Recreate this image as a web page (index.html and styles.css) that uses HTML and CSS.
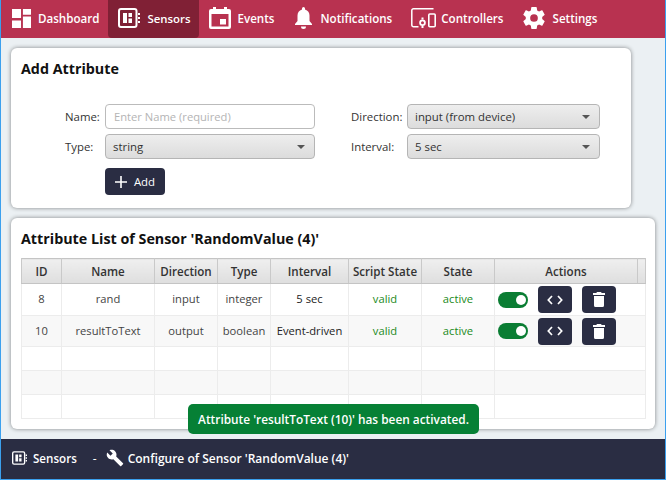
FILE: index.html
```html
<!DOCTYPE html>
<html lang="en">
<head>
<meta charset="utf-8">
<title>Sensors</title>
<link rel="stylesheet" href="styles.css">
</head>
<body>
<div class="app">
  <nav class="nav">
    <a class="nav-item first"><svg class="ic" width="19" height="19" viewBox="0 0 20 20"><path fill="#fff" d="M0 0h9.500v9.500H0zM11.500 0H20v6h-8.500zM0 12h9.500v8H0zM11.500 8H20v12h-8.500z"/></svg><span>Dashboard</span></a>
    <a class="nav-item active"><svg class="ic" width="22" height="20" viewBox="0 0 22 20"><rect x="1" y="1" width="17.500" height="18" rx="2" fill="none" stroke="#fff" stroke-width="2"/><path fill="#fff" d="M5 5h4v10H5zM10.500 5H14v4h-3.500zM10.500 10.500H14V15h-3.500zM20 5h2v2h-2zM20 9h2v2h-2zM20 13h2v2h-2z"/></svg><span>Sensors</span></a>
    <a class="nav-item"><svg class="ic" width="22" height="22" viewBox="0 0 22 22"><path fill="#fff" d="M4 0h3v2h8V0h3v2h2a2 2 0 0 1 2 2v16a2 2 0 0 1-2 2H2a2 2 0 0 1-2-2V4a2 2 0 0 1 2-2h2zM2.500 7v12.500h17V7zM11 12h6v5.500h-6z" fill-rule="evenodd"/></svg><span>Events</span></a>
    <a class="nav-item bell"><svg class="ic" width="17" height="22" viewBox="0 0 17 22"><path fill="#fff" d="M8.500 0a1.500 1.500 0 0 1 1.500 1.500v.9c3 .8 4.500 3.400 4.500 6.100v5.500L17 17v1H0v-1l2.500-3V8.500c0-2.700 1.500-5.300 4.500-6.100v-.9A1.500 1.500 0 0 1 8.500 0zM6 19.500h5A2.500 2.500 0 0 1 6 19.500z"/></svg><span>Notifications</span></a>
    <a class="nav-item ctrl"><svg class="ic" width="25" height="20" viewBox="0 0 25 20"><path fill="none" stroke="#fff" stroke-width="1.500" d="M7.500 18.700H2.500a1.700 1.700 0 0 1-1.700-1.700V2.500A1.700 1.700 0 0 1 2.500.8H22.500"/><rect x="17.800" y="6" width="6.400" height="12.800" rx="1" fill="none" stroke="#fff" stroke-width="1.600"/><circle cx="11.500" cy="14.800" r="2.400" fill="none" stroke="#fff" stroke-width="1.800"/><path fill="#fff" d="M10.500 9.500h2v2h-2zM10.500 18h2v2h-2z"/></svg><span>Controllers</span></a>
    <a class="nav-item gear"><svg class="ic" width="22" height="22" viewBox="2 2 20 20"><path fill="#fff" d="M12 15.500A3.500 3.500 0 1 1 12 8.500a3.500 3.500 0 0 1 0 7zm7.430-2.530c.04-.32.07-.64.07-.97s-.03-.66-.07-1l2.110-1.630c.19-.15.240-.42.120-.64l-2-3.460c-.12-.22-.39-.31-.61-.22l-2.490 1c-.52-.39-1.060-.73-1.690-.98l-.37-2.650A.506.506 0 0 0 14 2h-4c-.25 0-.46.180-.5.420l-.37 2.650c-.63.250-1.170.590-1.690.98l-2.490-1c-.22-.090-.49 0-.61.220l-2 3.460c-.13.220-.07.490.120.640L4.570 11c-.04.340-.07.670-.07 1s.03.650.07.970l-2.110 1.660c-.19.150-.25.420-.12.640l2 3.460c.12.220.39.300.61.220l2.490-1.010c.52.400 1.060.74 1.690.990l.37 2.650c.04.240.25.420.5.420h4c.25 0 .46-.18.5-.42l.37-2.650c.63-.26 1.170-.59 1.690-.99l2.490 1.010c.22.080.49 0 .61-.22l2-3.460c.12-.22.070-.49-.12-.64l-2.110-1.660z"/></svg><span>Settings</span></a>
  </nav>
  <main class="content">
    <section class="card add-card">
      <h2 class="card-title">Add Attribute</h2>
      <div class="form">
        <label class="lbl">Name:</label>
        <input class="field" type="text" placeholder="Enter Name (required)">
        <label class="lbl">Direction:</label>
        <div class="select"><span>input (from device)</span><i class="caret"></i></div>
        <label class="lbl">Type:</label>
        <div class="select wide"><span>string</span><i class="caret"></i></div>
        <label class="lbl">Interval:</label>
        <div class="select"><span>5 sec</span><i class="caret"></i></div>
        <span></span>
        <div class="add-wrap"><button class="add-btn"><svg width="12" height="12" viewBox="0 0 12 12"><path fill="#fff" d="M5.200 0h1.600v5.200H12v1.600H6.800V12H5.200V6.800H0V5.200h5.200z"/></svg><span>Add</span></button></div>
      </div>
    </section>
    <section class="card list-card">
      <h2 class="card-title">Attribute List of Sensor 'RandomValue (4)'</h2>
      <table class="grid">
        <colgroup><col class="c-id"><col class="c-name"><col class="c-dir"><col class="c-type"><col class="c-int"><col class="c-script"><col class="c-state"><col class="c-act"><col class="c-end"></colgroup>
        <thead><tr><th>ID</th><th>Name</th><th>Direction</th><th>Type</th><th>Interval</th><th>Script State</th><th>State</th><th>Actions</th><th></th></tr></thead>
        <tbody>
          <tr class="data">
            <td>8</td><td>rand</td><td>input</td><td>integer</td><td class="dark">5 sec</td><td class="ok">valid</td><td class="ok">active</td>
            <td colspan="2"><div class="actions"><span class="toggle"></span>
              <button class="act"><svg width="16" height="10" viewBox="0 0 16 10"><path fill="none" stroke="#fff" stroke-width="1.700" d="M5 1 1.300 5 5 9M11 1l3.700 4L11 9"/></svg></button>
              <button class="act"><svg width="12" height="15" viewBox="0 0 12 15"><path fill="#fff" d="M4 0h4l.7 1H12v2H0V1h3.300zM1 4h10v9.500A1.500 1.500 0 0 1 9.500 15h-7A1.500 1.500 0 0 1 1 13.500z"/></svg></button></div></td>
          </tr>
          <tr class="data alt">
            <td>10</td><td>resultToText</td><td>output</td><td>boolean</td><td class="dark">Event-driven</td><td class="ok">valid</td><td class="ok">active</td>
            <td colspan="2"><div class="actions"><span class="toggle"></span>
              <button class="act"><svg width="16" height="10" viewBox="0 0 16 10"><path fill="none" stroke="#fff" stroke-width="1.700" d="M5 1 1.300 5 5 9M11 1l3.700 4L11 9"/></svg></button>
              <button class="act"><svg width="12" height="15" viewBox="0 0 12 15"><path fill="#fff" d="M4 0h4l.7 1H12v2H0V1h3.300zM1 4h10v9.500A1.500 1.500 0 0 1 9.500 15h-7A1.500 1.500 0 0 1 1 13.500z"/></svg></button></div></td>
          </tr>
          <tr class="empty"><td></td><td></td><td></td><td></td><td></td><td></td><td></td><td colspan="2"></td></tr>
          <tr class="empty alt"><td></td><td></td><td></td><td></td><td></td><td></td><td></td><td colspan="2"></td></tr>
          <tr class="empty"><td></td><td></td><td></td><td></td><td></td><td></td><td></td><td colspan="2"></td></tr>
        </tbody>
      </table>
    </section>
    <div class="toast">Attribute 'resultToText (10)' has been activated.</div>
  </main>
  <footer class="footer">
    <svg width="15" height="14" viewBox="0 0 22 20"><rect x="1" y="1" width="17.500" height="18" rx="2" fill="none" stroke="#fff" stroke-width="2"/><path fill="#fff" d="M5 5h4v10H5zM10.500 5H14v4h-3.500zM10.500 10.500H14V15h-3.500zM20 5h2v2h-2zM20 9h2v2h-2zM20 13h2v2h-2z"/></svg>
    <span class="crumb">Sensors</span>
    <span class="sep">-</span>
    <svg class="wrench" width="18" height="18" viewBox="0 0 24 24"><path fill="#fff" d="M22.700 19 13.600 9.900c.9-2.300.4-5-1.500-6.900-2-2-5-2.400-7.400-1.300L9 6 6 9 1.600 4.700C.4 7.100.9 10.100 2.900 12.100c1.900 1.900 4.600 2.400 6.900 1.500l9.100 9.100c.4.400 1 .4 1.400 0l2.300-2.300c.5-.4.500-1.100.1-1.400z"/></svg>
    <span class="crumb">Configure of Sensor 'RandomValue (4)'</span>
  </footer>
</div>
</body>
</html>
```
FILE: styles.css
```css
* { box-sizing: border-box; }
html, body { margin: 0; padding: 0; }
body { font-family: "Open Sans", "Noto Sans", sans-serif; font-size: 11.2px; color: #333; }
.app {
  width: 666px; height: 480px; display: flex; flex-direction: column;
  border: 1px solid #3ba0ee; border-top: 0; background: #ebf0f3; position: relative; overflow: hidden;
}
.nav { height: 38px; background: #b83250; display: flex; align-items: stretch; padding-left: 1px; flex: none; }
.nav-item { display: flex; align-items: center; gap: 7px; padding: 0 9px 2px 10px; color: #fff; font-weight: 600; font-size: 11.600px; border-radius: 0 0 4px 4px; }
.nav-item.active { background: #802035; padding-right: 8px; font-size: 11.400px; }
.nav-item.bell { padding-left: 12px; gap: 8px; }
.nav-item.ctrl { gap: 5px; padding-left: 10px; }
.nav-item.gear { padding-left: 10px; gap: 8px; }
.ic { flex: none; }
.content { flex: 1; padding: 10px; display: flex; flex-direction: column; gap: 10px; min-height: 0; }
.card { background: #fff; border-radius: 6px; box-shadow: 0 0 4px rgba(0,0,0,.45); padding: 11px 10px 10px; }
.add-card { width: 620px; height: 160px; }
.list-card { width: 644px; height: 211px; }
.card-title { margin: 0; font-size: 14.300px; line-height: 20px; font-weight: 700; color: #111; }
.form { display: grid; grid-template-columns: 40px 246px 56px 193px; grid-template-rows: 25px 25px 27px; row-gap: 5px; margin-top: 25px; padding-left: 44px; }
.lbl { display: flex; align-items: center; color: #333; font-size: 11.400px; }
.field { width: 210px; height: 25px; border: 1px solid #bbb; border-radius: 4px; padding: 0 8px; font: inherit; color: #333; outline: 0; }
.field::placeholder { color: #b4b4b4; }
.select { width: 193px; height: 25px; border: 1px solid #b5b5b5; border-radius: 4px; background: linear-gradient(#eee, #dcdcdc); display: flex; align-items: center; justify-content: space-between; padding: 0 9px 0 7px; color: #333; font-size: 11.400px; }
.select.wide { width: 210px; }
.caret { width: 0; height: 0; border: 4px solid transparent; border-top: 4px solid #555; border-bottom: 0; }
.add-wrap { grid-column: 2 / span 3; padding-top: 4px; }
.add-btn { width: 60px; height: 27px; border: 0; border-radius: 4px; background: #2a2d43; color: #fff; font: inherit; font-size: 11.400px; display: flex; align-items: center; justify-content: center; gap: 7px; padding: 0; }
.grid { margin-top: 9px; width: 624px; height: 160px; border-collapse: collapse; table-layout: fixed; border: 1px solid #c4c4c4; text-align: center; }
.c-id { width: 40px; } .c-name { width: 93px; } .c-dir { width: 63px; } .c-type { width: 53px; } .c-int { width: 78px; } .c-script { width: 73px; } .c-state { width: 73px; } .c-act { width: 143px; } .c-end { width: 8px; }
.grid th { height: 25px; padding: 0; background: linear-gradient(#efefef, #dedede); border: 1px solid #c9c9c9; border-top: 0; border-bottom: 1px solid #c4c4c4; font-weight: 600; font-size: 11.600px; color: #333; white-space: nowrap; overflow: hidden; }
.grid td { padding: 0 0 2px; border: 1px solid #ececec; color: #444; white-space: nowrap; }
.grid td[colspan] { padding: 0; }
.data td { height: 32px; } .data.alt td { height: 31px; } .empty td { height: 24px; }
.alt td { background: #f8f8f8; }
.grid td.dark { color: #222; }
.grid td.ok { color: #1a8a1a; }
.actions { display: flex; align-items: center; padding-left: 3px; }
.toggle { width: 30px; height: 16px; border-radius: 8px; background: #0a7d33; position: relative; margin-right: 10px; }
.toggle::after { content: ""; position: absolute; right: 2px; top: 3px; width: 10px; height: 10px; border-radius: 50%; background: #fff; }
.act { width: 34px; height: 27px; border: 0; padding: 0; border-radius: 4px; background: #2a2d43; display: flex; align-items: center; justify-content: center; margin-right: 10px; }
.toast { position: absolute; left: 187px; top: 404px; width: 291px; height: 30px; border-radius: 5px; background: #068035; color: #fff; font-weight: 600; font-size: 11.850px; display: flex; align-items: center; justify-content: center; }
.footer { height: 40px; flex: none; background: #2a2d43; color: #fff; display: flex; align-items: center; padding: 0 0 2px 11px; font-weight: 600; font-size: 12px; }
.footer svg { flex: none; }
.crumb { margin-left: 6px; font-size: 11.600px; }
.sep { margin-left: 16px; margin-right: 9px; font-weight: 400; }
.wrench + .crumb { margin-left: 4px; font-size: 12px; }
```
